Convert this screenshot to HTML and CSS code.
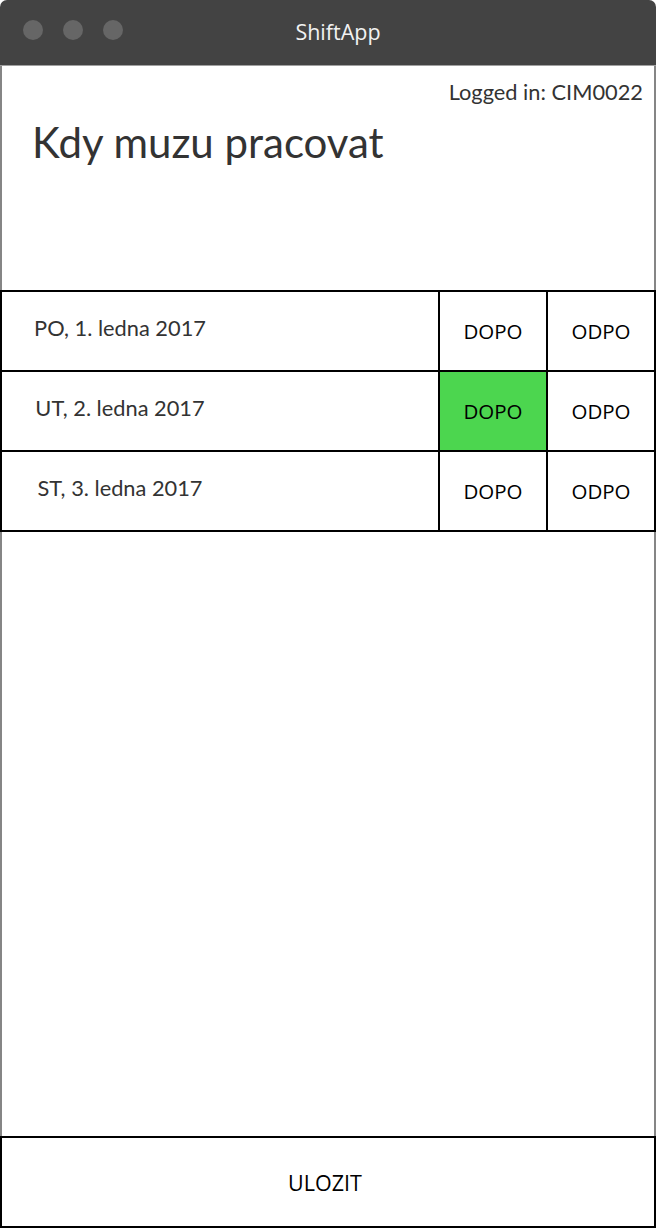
FILE: index.html
```html
<!DOCTYPE html>
<html>
<head>
<meta charset="utf-8">
<link rel="stylesheet" href="styles.css">
</head>
<body>
<div class="window">
  <div class="titlebar">
    <div class="dots"><span class="dot"></span><span class="dot"></span><span class="dot"></span></div>
    <div class="title">ShiftApp</div>
  </div>
  <div class="content">
    <div class="header">
      <div class="login">Logged in: CIM0022</div>
      <h1 class="heading">Kdy muzu pracovat</h1>
    </div>
    <div class="table">
      <div class="cell date"><span class="date-text">PO, 1. ledna 2017</span></div>
      <div class="cell shift">DOPO</div>
      <div class="cell shift">ODPO</div>
      <div class="cell date"><span class="date-text">UT, 2. ledna 2017</span></div>
      <div class="cell shift selected">DOPO</div>
      <div class="cell shift">ODPO</div>
      <div class="cell date"><span class="date-text">ST, 3. ledna 2017</span></div>
      <div class="cell shift">DOPO</div>
      <div class="cell shift">ODPO</div>
    </div>
    <div class="spacer"></div>
    <div class="save">ULOZIT</div>
  </div>
</div>
</body>
</html>
```

FILE: styles.css
```css
html, body {
  margin: 0;
  padding: 0;
  background: #ffffff;
}
.window {
  width: 656px;
  height: 1228px;
  display: flex;
  flex-direction: column;
}
.titlebar {
  height: 65px;
  background: #434343;
  border-radius: 7px 7px 0 0;
  border-bottom: 1px solid #a0a0a0;
  position: relative;
  display: flex;
  align-items: center;
  justify-content: center;
  flex-shrink: 0;
}
.dots {
  position: absolute;
  left: 23px;
  top: 20px;
  display: flex;
  gap: 20px;
}
.dot {
  width: 20px;
  height: 20px;
  border-radius: 50%;
  background: #666666;
}
.title {
  font-family: "Open Sans", sans-serif;
  font-size: 21.5px;
  color: #f2f2f2;
  margin-left: 20px;
  margin-top: -3px;
}
.content {
  flex: 1;
  border-left: 2px solid #858585;
  border-right: 2px solid #858585;
  display: flex;
  flex-direction: column;
  min-height: 0;
}
.header {
  height: 224px;
  position: relative;
  flex-shrink: 0;
}
.login {
  font-family: "Lato", sans-serif;
  font-size: 21.8px;
  color: #333333;
  text-align: right;
  padding: 12px 11px 0 0;
}
.heading {
  margin: 12px 0 0 30px;
  font-family: "Lato", sans-serif;
  font-weight: 400;
  font-size: 42px;
  color: #333333;
}
.table {
  display: grid;
  grid-template-columns: 438px 108px 108px;
  grid-auto-rows: 80px;
  margin-left: -2px;
  margin-right: -2px;
  border-top: 2px solid #000;
  border-left: 2px solid #000;
}
.cell {
  border-right: 2px solid #000;
  border-bottom: 2px solid #000;
  display: flex;
  align-items: center;
}
.date {
  padding-bottom: 7px;
}
.date-text {
  width: 236px;
  text-align: center;
  font-family: "Lato", sans-serif;
  font-size: 21.8px;
  color: #333333;
}
.shift {
  justify-content: center;
  font-family: "Open Sans", sans-serif;
  font-size: 20.5px;
  color: #000;
}
.selected {
  background: #4cd64f;
}
.spacer {
  flex: 1;
}
.save {
  height: 88px;
  margin: 0 -2px 0 -2px;
  border: 2px solid #000;
  display: flex;
  align-items: center;
  justify-content: center;
  font-family: "Open Sans", sans-serif;
  font-size: 21.5px;
  color: #000;
  padding-right: 6px;
}
```
